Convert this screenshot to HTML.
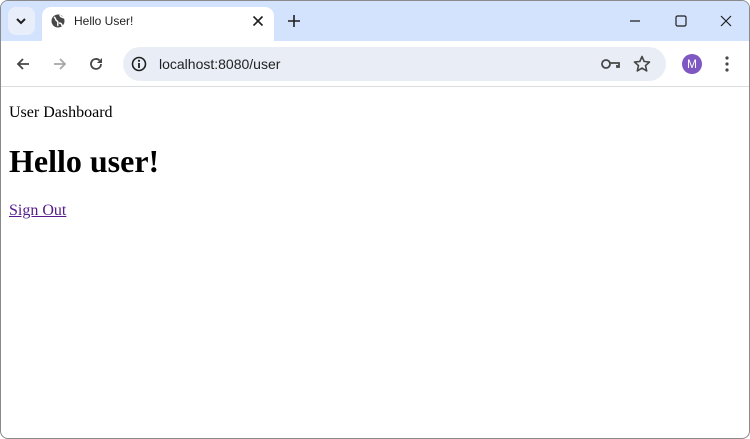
<!DOCTYPE html>
<html><head><style>
*{box-sizing:border-box}
html,body{margin:0;padding:0;width:750px;height:439px;overflow:hidden;background:#fff}
.win{position:absolute;left:0;top:0;width:750px;height:439px;border:1px solid #8a8a8a;border-radius:8px;overflow:hidden;background:#fff}
.tabbar{position:absolute;left:0;top:0;width:750px;height:40px;background:#d3e3fd}
.tsel{position:absolute;left:7px;top:6px;width:27px;height:28px;background:#e8effb;border-radius:8px}
.tab{position:absolute;left:41px;top:6px;width:232px;height:36px;background:#fff;border-radius:9px 9px 0 0}
.toolbar{position:absolute;left:0;top:40px;width:750px;height:46px;background:#fff;border-bottom:1px solid #dadce0}
.omni{position:absolute;left:122px;top:6px;width:543px;height:34px;background:#e9eef6;border-radius:17px}
.sys{font-family:"Liberation Sans",sans-serif;font-size:12px;color:#1f1f1f;position:absolute}
.content{position:absolute;left:0;top:87px;width:750px;font-family:"Liberation Serif",serif;font-size:16px;color:#000;padding:0 8px}
p{margin:16px 0;line-height:18px}
h1{font-size:32px;margin:21px 0 22px;line-height:37px}
a{color:#551a8b}
</style></head><body>
<div class="win">
<div class="tabbar">
 <div class="tsel"></div>
 <svg style="position:absolute;left:14px;top:14px" width="12" height="12"><path d="M2 4l4 4 4-4" stroke="#1f1f1f" stroke-width="2" fill="none"/></svg>
 <div class="tab"></div>
 <svg style="position:absolute;left:50px;top:13px" width="14" height="14"><circle cx="7" cy="7" r="6.5" fill="#474747"/><path d="M3 3c2 1 1 3 3 4s0 3 1 5M9 1c0 2 2 2 4 3M8 9c2 0 3 1 3 3" stroke="#fff" stroke-width="1.5" fill="none"/></svg>
 <div class="sys" style="left:73px;top:13px">Hello User!</div>
 <svg style="position:absolute;left:251px;top:14px" width="12" height="12"><path d="M1.5 1.5l9 9M10.5 1.5l-9 9" stroke="#1f1f1f" stroke-width="1.6"/></svg>
 <svg style="position:absolute;left:286px;top:13px" width="14" height="14"><path d="M7 1v12M1 7h12" stroke="#1f1f1f" stroke-width="1.6"/></svg>
 <svg style="position:absolute;left:628px;top:19px" width="12" height="2"><path d="M1 1h10" stroke="#1f1f1f" stroke-width="1.2"/></svg>
 <svg style="position:absolute;left:674px;top:14px" width="12" height="12"><rect x="1" y="1" width="10" height="10" rx="1.5" stroke="#1f1f1f" stroke-width="1.2" fill="none"/></svg>
 <svg style="position:absolute;left:719px;top:14px" width="12" height="12"><path d="M1 1l10 10M11 1L1 11" stroke="#1f1f1f" stroke-width="1.2"/></svg>
</div>
<div class="toolbar">
 <svg style="position:absolute;left:15px;top:16px" width="14" height="14"><path d="M13 7H2M7 2L2 7l5 5" stroke="#474747" stroke-width="1.8" fill="none"/></svg>
 <svg style="position:absolute;left:52px;top:16px" width="14" height="14"><path d="M1 7h11M7 2l5 5-5 5" stroke="#a8a8a8" stroke-width="1.8" fill="none"/></svg>
 <svg style="position:absolute;left:88px;top:16px" width="14" height="14"><path d="M12 7a5 5 0 1 1-1.5-3.6" stroke="#474747" stroke-width="1.8" fill="none"/><path d="M13 1v5H8z" fill="#474747"/></svg>
 <div class="omni">
  <svg style="position:absolute;left:8px;top:9px" width="16" height="16"><circle cx="8" cy="8" r="6.5" stroke="#1f1f1f" stroke-width="1.6" fill="none"/><path d="M8 7v5" stroke="#1f1f1f" stroke-width="1.8"/><circle cx="8" cy="4.8" r="1.1" fill="#1f1f1f"/></svg>
  <div class="sys" style="left:36px;top:9px;font-size:14px">localhost:8080/user</div>
  <svg style="position:absolute;left:478px;top:11px" width="20" height="12"><circle cx="5" cy="6" r="4" stroke="#474747" stroke-width="1.8" fill="none"/><path d="M9 5h9v4h-2V7" stroke="#474747" stroke-width="1.8" fill="none"/></svg>
  <svg style="position:absolute;left:510px;top:8px" width="18" height="18"><path d="M9 1.5l2.2 5 5.3.5-4 3.6 1.2 5.3L9 13.1 4.3 15.9l1.2-5.3-4-3.6 5.3-.5z" stroke="#474747" stroke-width="1.6" fill="none" stroke-linejoin="round"/></svg>
 </div>
 <div style="position:absolute;left:681px;top:13px;width:20px;height:20px;border-radius:50%;background:#7e57c2;color:#fff;font:12px 'Liberation Sans',sans-serif;text-align:center;line-height:20px">M</div>
 <svg style="position:absolute;left:724px;top:15px" width="4" height="16"><circle cx="2" cy="2" r="1.6" fill="#474747"/><circle cx="2" cy="8" r="1.6" fill="#474747"/><circle cx="2" cy="14" r="1.6" fill="#474747"/></svg>
</div>
<div class="content">
<p>User Dashboard</p>
<h1>Hello user!</h1>
<p><a href="#">Sign Out</a></p>
</div>
</div>
</body></html>
